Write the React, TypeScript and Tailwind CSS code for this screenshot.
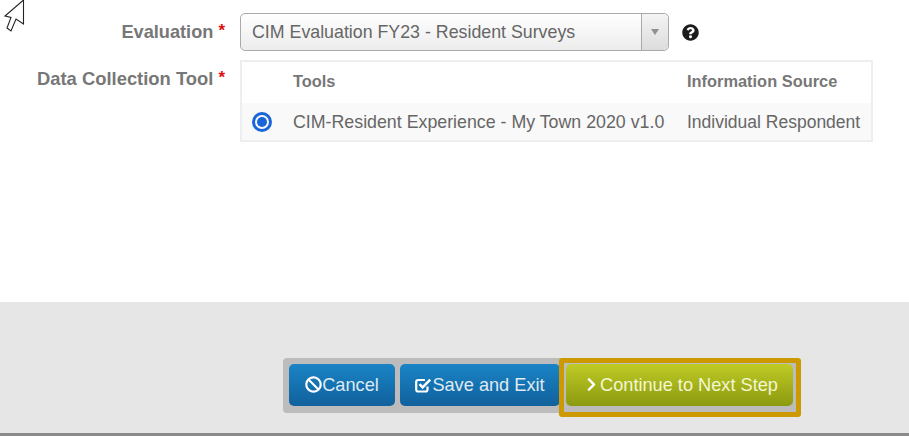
import React from "react";
import { FaBan, FaChevronRight, FaQuestionCircle } from "react-icons/fa";

function Label({ text, size }: { text: string; size: string }) {
  return (
    <div className={`w-[240px] shrink-0 pr-[15px] flex justify-end gap-[5px] font-bold leading-[24px] text-[#777777] ${size}`}>
      <span>{text}</span>
      <span className="text-[#e01010] text-[17px] -mt-[1px]">*</span>
    </div>
  );
}

// font awesome 4 check-square-o, box is open where the tick crosses it
function CheckSquareIcon() {
  return (
    <svg width="17" height="16" viewBox="0 0 17 16" fill="none" stroke="#fff" strokeWidth="2.2" className="-mt-[1px]">
      <path d="M12.5 9.5 V12.5 Q12.5 14.5 10.5 14.5 H3.2 Q1.2 14.5 1.2 12.5 V5 Q1.2 3 3.2 3 H10" />
      <path d="M4.5 7.2 L7.6 10.3 L15.2 2.7" strokeWidth="2.6" />
    </svg>
  );
}

export default function App() {
  return (
    <div className="relative w-[909px] h-[436px] overflow-hidden bg-white font-['Liberation_Sans',Arial,sans-serif] flex flex-col">
      {/* mouse pointer */}
      <svg className="absolute left-0 top-0" width="26" height="33" viewBox="0 0 26 33" fill="none" stroke="#222" strokeWidth="1.1">
        <path d="M23.5 0 L5 16 L11 17.5 L7 28 L11 31 L16 19 L23.5 24 Z" fill="#fff" />
      </svg>

      {/* Form */}
      <div className="h-[302px] shrink-0 pt-[13px]">
        <div className="flex items-center h-[38px]">
          <Label text="Evaluation" size="text-[18.2px]" />
          <div className="w-[429px] h-[38px] flex border border-[#aaaaaa] rounded-[5px] bg-gradient-to-b from-white to-[#ececec] text-[#666666] text-[17.8px]">
            <div className="flex-1 flex items-center pl-[11px] pt-[1px]">CIM Evaluation FY23 - Resident Surveys</div>
            <div className="w-[27px] flex items-center justify-center border-l border-[#aaaaaa] bg-gradient-to-b from-[#f4f4f4] to-[#dcdcdc] rounded-r-[5px]">
              <div className="w-0 h-0 border-x-[4px] border-x-transparent border-t-[6px] border-t-[#909090]" />
            </div>
          </div>
          <FaQuestionCircle className="ml-[13px] text-[#1c1c1c]" size={17} />
        </div>

        <div className="flex mt-[9px]">
          <div className="pt-[7px]">
            <Label text="Data Collection Tool" size="text-[18.4px]" />
          </div>
          <div className="w-[633px] h-[82px] border-2 border-[#eeeeee] text-[17.8px] text-[#666666]">
            <div className="h-[41px] flex items-center pb-[2px] font-bold text-[16.4px] text-[#777777]">
              <div className="w-[51px]" />
              <div className="w-[394px]">Tools</div>
              <div>Information Source</div>
            </div>
            <div className="h-[37px] flex items-center bg-[#f9f9f9]">
              <div className="w-[51px] pl-[10px]">
                <div className="w-[20px] h-[20px] rounded-full border-[3px] border-[#1a66d8] flex items-center justify-center">
                  <div className="w-[10px] h-[10px] rounded-full bg-[#1a66d8]" />
                </div>
              </div>
              <div className="w-[394px] whitespace-nowrap pt-[1px]">CIM-Resident Experience - My Town 2020 v1.0</div>
              <div className="whitespace-nowrap pt-[1px] text-[17.5px]">Individual Respondent</div>
            </div>
          </div>
        </div>
      </div>

      {/* Footer */}
      <div className="flex-1 bg-[#e6e6e6] pt-[56px] pl-[283px]">
        <div className="relative w-[517px] h-[55px] bg-[#bcbcbc] rounded-[4px] flex items-start gap-[5px] p-[6px] text-[18.2px] text-[#dfeaf2]">
          <button className="w-[106px] h-[42px] rounded-[5px] bg-gradient-to-b from-[#1a84c6] to-[#11619c] flex items-center justify-center">
            <FaBan size={17} className="text-white -mt-[2px]" />
            <span className="pt-[1px]">Cancel</span>
          </button>
          <button className="w-[160px] h-[42px] rounded-[5px] bg-gradient-to-b from-[#1a84c6] to-[#11619c] flex items-center justify-center">
            <CheckSquareIcon />
            <span className="pt-[1px]">Save and Exit</span>
          </button>
          <button className="ml-[1px] w-[227px] h-[42px] rounded-[5px] bg-gradient-to-b from-[#bfcb25] to-[#8c9a10] text-[#f3f6d2] flex items-center justify-center">
            <FaChevronRight size={15} className="text-white mr-[1px] ml-[3px] -mt-[1px]" />
            <span className="pt-[1px]">Continue to Next Step</span>
          </button>
          {/* highlight around the next step button */}
          <div className="absolute left-[276px] top-0 w-[242px] h-[59px] border-[5px] border-[#cc9900] rounded-[3px]" />
        </div>
      </div>

      {/* bottom rule */}
      <div className="h-[3px] shrink-0 bg-[#8a8a8a]" />
    </div>
  );
}
